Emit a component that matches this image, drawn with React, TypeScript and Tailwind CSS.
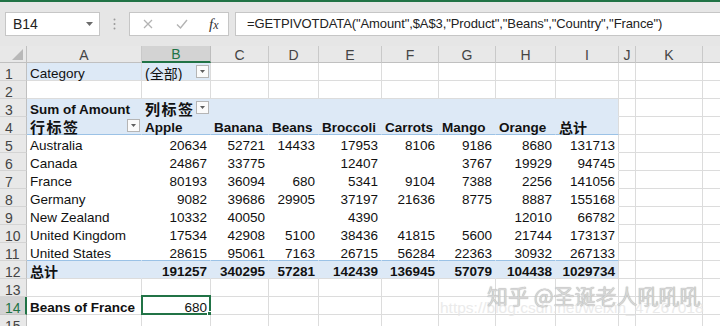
import React from 'react';

const COLW = [
  'w-[115px]',
  'w-[69px]',
  'w-[58px]',
  'w-[50px]',
  'w-[63px]',
  'w-[57px]',
  'w-[57px]',
  'w-[60px]',
  'w-[63px]',
  'w-[17px]',
  'w-[67px]',
  'w-[67px]',
];
const LETTERS = ['A', 'B', 'C', 'D', 'E', 'F', 'G', 'H', 'I', 'J', 'K', ''];

type Cell = { t: string; right?: boolean; bold?: boolean; btn?: boolean; cjk?: 'sm' | 'lg' };

const num = (v: string, bold = false): Cell => ({ t: v, right: true, bold });

const countries: [string, string[]][] = [
  ['Australia', ['20634', '52721', '14433', '17953', '8106', '9186', '8680', '131713']],
  ['Canada', ['24867', '33775', '', '12407', '', '3767', '19929', '94745']],
  ['France', ['80193', '36094', '680', '5341', '9104', '7388', '2256', '141056']],
  ['Germany', ['9082', '39686', '29905', '37197', '21636', '8775', '8887', '155168']],
  ['New Zealand', ['10332', '40050', '', '4390', '', '', '12010', '66782']],
  ['United Kingdom', ['17534', '42908', '5100', '38436', '41815', '5600', '21744', '173137']],
  ['United States', ['28615', '95061', '7163', '26715', '56284', '22363', '30932', '267133']],
];
const totals = ['191257', '340295', '57281', '142439', '136945', '57079', '104438', '1029734'];

const data: Record<number, (Cell | null)[]> = {
  1: [{ t: 'Category' }, { t: '(全部)', btn: true, cjk: 'sm' }],
  3: [{ t: 'Sum of Amount', bold: true }, { t: '列标签', bold: true, btn: true, cjk: 'lg' }],
  4: [
    { t: '行标签', bold: true, btn: true, cjk: 'lg' },
    { t: 'Apple', bold: true },
    { t: 'Banana', bold: true },
    { t: 'Beans', bold: true },
    { t: 'Broccoli', bold: true },
    { t: 'Carrots', bold: true },
    { t: 'Mango', bold: true },
    { t: 'Orange', bold: true },
    { t: '总计', bold: true, cjk: 'sm' },
  ],
  12: [{ t: '总计', bold: true, cjk: 'sm' }, ...totals.map((v) => num(v, true))],
  14: [{ t: 'Beans of France', bold: true }, num('680')],
};
countries.forEach(([name, vals], i) => {
  data[5 + i] = [{ t: name }, ...vals.map((v) => (v ? num(v) : null))];
});

function FilterBtn() {
  return (
    <span className="flex h-[13px] w-[13px] shrink-0 items-center justify-center border border-[#b5b5b5] bg-[#fbfbfb]">
      <svg width="11" height="11" viewBox="0 0 11 11">
        <polygon points="3,4 8,4 5.5,7" fill="#5f5f5f" />
      </svg>
    </span>
  );
}

function CellView({ row, col }: { row: number; col: number }) {
  const cell = data[row]?.[col] ?? null;
  const inPivot = row >= 3 && row <= 12 && col <= 8;
  const blue = (row === 1 && col <= 1) || ((row === 3 || row === 4 || row === 12) && col <= 8);

  let br = 'border-r-[#dcdcdc]';
  if (inPivot && col < 8) br = 'border-r-transparent';

  let bb = 'border-b-[#dcdcdc]';
  if (inPivot) {
    if (row === 4 || row === 11) bb = 'border-b-[#9bc2e6]';
    else if (row === 12) bb = 'border-b-[#dcdcdc]';
    else bb = 'border-b-transparent';
  }

  const bg = blue ? 'bg-[#dde9f6]' : 'bg-white';
  const selected = row === 14 && col === 1;

  return (
    <div
      className={`relative flex h-[18px] shrink-0 items-center border-r border-b ${br} ${bb} ${bg} ${COLW[col]}`}
    >
      {cell && (
        <div
          className={`flex min-w-0 flex-1 items-center ${cell.right ? 'justify-end pr-[3px]' : 'justify-between pl-[3px] pr-[1px]'}`}
        >
          <span
            className={`translate-y-[2px] whitespace-nowrap leading-[18px] text-[#111] ${cell.bold ? 'font-bold' : 'font-normal'} ${
              cell.cjk === 'lg'
                ? 'text-[15px] tracking-[1.5px]'
                : cell.cjk === 'sm'
                  ? 'text-[14px]'
                  : 'text-[13.5px]'
            }`}
          >
            {cell.t}
          </span>
          {cell.btn && <FilterBtn />}
        </div>
      )}
      {selected && (
        <>
          <div className="pointer-events-none absolute -left-[1px] -top-[2px] h-[20px] w-[70px] border-2 border-[#217346]" />
          <div className="absolute -bottom-[3px] -right-[3px] h-[6px] w-[6px] border border-white bg-[#217346]" />
        </>
      )}
    </div>
  );
}

function Row({ row }: { row: number }) {
  const sel = row === 14;
  return (
    <div className="flex h-[18px]">
      <div
        className={`flex h-[18px] w-[27px] shrink-0 items-center border-b pl-[5px] text-[14px] leading-[18px] ${
          sel
            ? 'border-b-[#c6c6c6] border-r-2 border-r-[#217346] bg-[#d3d3d3] text-[#217346]'
            : 'border-b-[#d4d4d4] border-r border-r-[#c0c0c0] bg-[#e8e8e8] text-[#444]'
        }`}
      >
        <span className="translate-y-[2px]">{row}</span>
      </div>
      {LETTERS.map((_, c) => (
        <CellView key={c} row={row} col={c} />
      ))}
    </div>
  );
}

function Toolbar() {
  return (
    <div className="flex h-[46px] flex-col bg-[#e6e6e6]">
      <div className="h-[2px] bg-[#217346]" />
      <div className="flex h-[44px] items-center">
        <div className="ml-[5px] flex h-[24px] w-[95px] items-center justify-between border border-[#c6c6c6] bg-white pl-[7px] pr-[5px]">
          <span className="text-[14px] text-[#222]">B14</span>
          <svg width="9" height="6" viewBox="0 0 9 6">
            <polygon points="1,1 8,1 4.5,5" fill="#6b6b6b" />
          </svg>
        </div>
        <div className="flex w-[29px] justify-center">
          <svg width="3" height="12" viewBox="0 0 3 12">
            <circle cx="1.5" cy="1.5" r="1" fill="#9a9a9a" />
            <circle cx="1.5" cy="6" r="1" fill="#9a9a9a" />
            <circle cx="1.5" cy="10.5" r="1" fill="#9a9a9a" />
          </svg>
        </div>
        <div className="flex h-[24px] w-[100px] items-center border border-[#c6c6c6] bg-white">
          <svg className="ml-[12px]" width="12" height="12" viewBox="0 0 12 12">
            <path d="M2 2 L10 10 M10 2 L2 10" stroke="#b3b3b3" strokeWidth="1.3" fill="none" />
          </svg>
          <svg className="ml-[21px]" width="14" height="12" viewBox="0 0 14 12">
            <path d="M2 6.5 L5.5 10 L12 2" stroke="#b3b3b3" strokeWidth="1.4" fill="none" />
          </svg>
          <span className="ml-[20px] font-['Liberation_Serif',serif] text-[15px] italic text-[#333]">
            f<span className="text-[12px]">x</span>
          </span>
        </div>
        <div className="ml-[6px] flex h-[24px] flex-1 items-center border-y border-l border-[#c6c6c6] bg-white pl-[11px]">
          <span className="whitespace-nowrap text-[13px] tracking-[-0.1px] text-[#222]">
            =GETPIVOTDATA("Amount",$A$3,"Product","Beans","Country","France")
          </span>
        </div>
      </div>
    </div>
  );
}

function HeaderRow() {
  return (
    <div className="flex h-[17px] bg-[#e8e8e8]">
      <div className="relative h-[17px] w-[27px] shrink-0 border-r border-b border-[#c0c0c0]">
        <svg className="absolute bottom-[2px] right-[3px]" width="11" height="11" viewBox="0 0 11 11">
          <polygon points="11,0 11,11 0,11" fill="#b8b8b8" />
        </svg>
      </div>
      {LETTERS.map((l, c) => (
        <div
          key={c}
          className={`flex h-[17px] shrink-0 items-center justify-center border-r text-[14px] leading-[17px] ${COLW[c]} ${
            c === 1
              ? 'border-r-[#bdbdbd] border-b-2 border-b-[#217346] bg-[#d3d3d3] text-[#217346]'
              : 'border-r-[#c9c9c9] border-b border-b-[#c0c0c0] text-[#444]'
          }`}
        >
          {l && <span className="translate-y-[1px]">{l}</span>}
        </div>
      ))}
    </div>
  );
}

export default function App() {
  const rows = Array.from({ length: 15 }, (_, i) => i + 1);
  return (
    <div className="relative h-[326px] w-[720px] overflow-hidden bg-white font-['Liberation_Sans','Noto_Sans_CJK_SC',sans-serif]">
      <Toolbar />
      <div className="overflow-hidden">
        <HeaderRow />
        {rows.map((r) => (
          <Row key={r} row={r} />
        ))}
      </div>
      <div className="pointer-events-none absolute left-[440px] top-[299px] whitespace-nowrap text-[15.5px] leading-[18px] text-[#e6e6e6] opacity-80">
        https://blog.csdn.net/weixin_47267018
      </div>
      <div className="pointer-events-none absolute left-[487px] top-[282px] whitespace-nowrap font-['Noto_Sans_CJK_SC',sans-serif] text-[21px] leading-[26px] text-[#d6d6d6] [text-shadow:0_0_1px_#9a9a9a]">
        知乎 @圣诞老人吼吼吼
      </div>
    </div>
  );
}
